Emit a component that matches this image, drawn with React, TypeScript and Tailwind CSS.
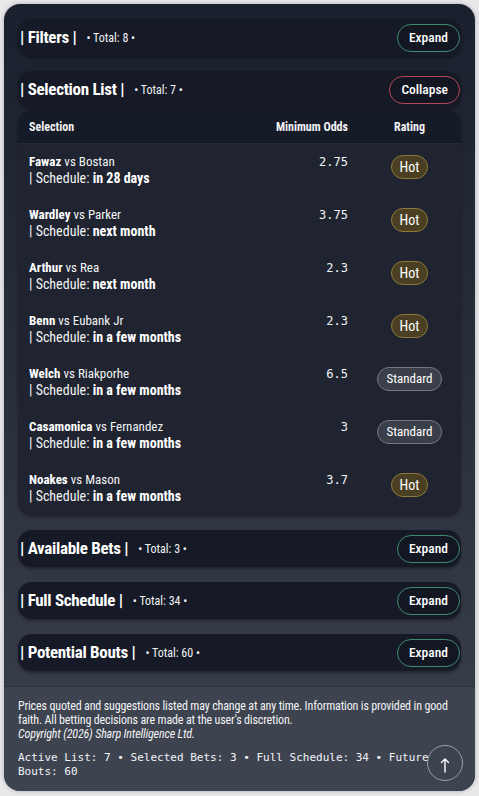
import React from "react";

const sans = { fontFamily: '"Roboto Condensed", "Liberation Sans Narrow", "DejaVu Sans Condensed", Roboto, sans-serif', fontStretch: "condensed" as const };
const mono = { fontFamily: '"DejaVu Sans Mono", "Liberation Mono", monospace' };

function SectionHeader({ title, total, open }: { title: string; total: number; open?: boolean }) {
  return (
    <div className="flex items-center justify-between h-[37px] pl-[2px] pr-[1px] rounded-[14px] bg-[#151a26] shadow-[0_2px_3px_rgba(0,0,0,0.35)]">
      <div className="flex items-center gap-[10px]">
        <span className="text-[17px] font-bold text-white tracking-[-0.3px]">| {title} |</span>
        <span className="text-[12px] text-gray-100">• Total: {total} •</span>
      </div>
      <button
        className={`h-[28px] px-[11px] rounded-full bg-[#121722] text-[13.5px] font-medium text-white border ${open ? "border-[#b5475a]" : "border-[#3f8a6e]"}`}
      >
        {open ? "Collapse" : "Expand"}
      </button>
    </div>
  );
}

const rows = [
  { a: "Fawaz", b: "Bostan", s: "in 28 days", o: "2.75", r: "Hot" },
  { a: "Wardley", b: "Parker", s: "next month", o: "3.75", r: "Hot" },
  { a: "Arthur", b: "Rea", s: "next month", o: "2.3", r: "Hot" },
  { a: "Benn", b: "Eubank Jr", s: "in a few months", o: "2.3", r: "Hot" },
  { a: "Welch", b: "Riakporhe", s: "in a few months", o: "6.5", r: "Standard" },
  { a: "Casamonica", b: "Fernandez", s: "in a few months", o: "3", r: "Standard" },
  { a: "Noakes", b: "Mason", s: "in a few months", o: "3.7", r: "Hot" },
];

export default function App() {
  return (
    <div className="min-h-screen bg-[#e8e8ea] p-[4px]" style={sans}>
      <div className="rounded-[16px] overflow-hidden bg-gradient-to-b from-[#1b202e] via-[#2a2f3c] to-[#3c414e] shadow-[0_0_4px_rgba(0,0,0,0.25)]">
        <div className="px-[14px] pt-[15px] pb-[15px] flex flex-col gap-[15px]">
          <SectionHeader title="Filters" total={8} />
          <div>
            <SectionHeader title="Selection List" total={7} open />
            <div className="mt-[2px] rounded-[14px] overflow-hidden bg-[#1f2430] shadow-[0_2px_3px_rgba(0,0,0,0.35)]">
              <div className="flex items-center h-[34px] bg-[#151b27] border-b border-[#252b38] text-[12px] font-bold text-gray-100">
                <div className="flex-1 pl-[11px]">Selection</div>
                <div className="w-[120px] pr-[10px] text-right">Minimum Odds</div>
                <div className="w-[103px] text-center">Rating</div>
              </div>
              {rows.map((r, i) => (
                <div key={i} className={`flex h-[53px] pt-[10px] ${i < rows.length - 1 ? "border-b border-[#232836]" : ""}`}>
                  <div className="flex-1 pl-[11px] text-gray-100">
                    <div className="text-[13px] leading-[16px]">
                      <span className="font-bold text-white">{r.a}</span> vs {r.b}
                    </div>
                    <div className="text-[14px] leading-[17px]">
                      | Schedule: <span className="font-bold text-white">{r.s}</span>
                    </div>
                  </div>
                  <div className="w-[120px] pr-[10px] text-right text-[12px] leading-[16px] text-gray-100" style={mono}>
                    {r.o}
                  </div>
                  <div className="w-[103px] flex justify-center pt-[1px]">
                    {r.r === "Hot" ? (
                      <span className="h-[24px] px-[8px] flex items-center rounded-full bg-[#4a3f22] border border-[#8c7a3c] text-[14px] text-white">Hot</span>
                    ) : (
                      <span className="h-[24px] px-[8px] flex items-center rounded-full bg-[#3a3f4a] border border-[#737988] text-[13px] text-white">Standard</span>
                    )}
                  </div>
                </div>
              ))}
            </div>
          </div>
          <SectionHeader title="Available Bets" total={3} />
          <SectionHeader title="Full Schedule" total={34} />
          <SectionHeader title="Potential Bouts" total={60} />
        </div>
        <div className="border-t border-[#2a2f3a] bg-[#3e4350] px-[14px] pt-[12px] pb-[12px] text-gray-100">
          <p className="text-[12px] leading-[14px] tracking-[-0.15px]">
            Prices quoted and suggestions listed may change at any time. Information is provided in good faith. All betting decisions are made at the user's discretion.
            <br />
            <i>Copyright (2026) Sharp Intelligence Ltd.</i>
          </p>
          <p className="mt-[10px] text-[11px] leading-[14px]" style={mono}>
            Active List: 7 • Selected Bets: 3 • Full Schedule: 34 • Future Bouts: 60
          </p>
        </div>
      </div>
      <button className="fixed right-[16px] bottom-[15px] w-[36px] h-[36px] rounded-full border border-[#9aa0aa] flex items-center justify-center text-white">
        <svg width="10" height="16" viewBox="0 0 10 16" fill="none" stroke="currentColor" strokeWidth="1.4" strokeLinecap="round" className="mt-[4px]">
          <path d="M5 15V2M1.5 5.5L5 2l3.5 3.5" />
        </svg>
      </button>
    </div>
  );
}
